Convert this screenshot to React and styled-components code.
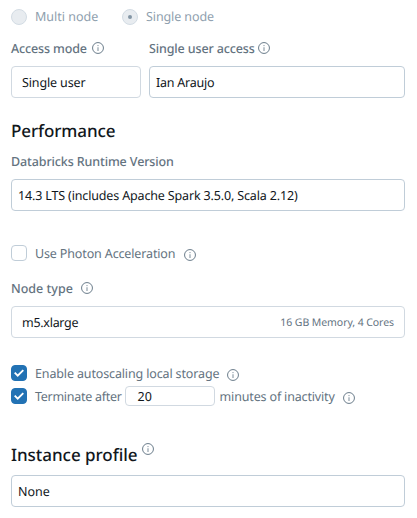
import React from "react";
import styled, { createGlobalStyle } from "styled-components";

const GlobalStyle = createGlobalStyle`
  * { box-sizing: border-box; }
  body {
    margin: 0;
    background: #fff;
    font-family: "Noto Sans", "Open Sans", sans-serif;
    font-size: 12.5px;
    line-height: 20px;
    color: #11171c;
    text-rendering: geometricPrecision;
  }
`;

const Form = styled.main`
  width: 417px;
  height: 518px;
  padding: 7px 12px 0 11px;
  overflow: hidden;
`;

const Row = styled.div`
  display: flex;
  align-items: center;
  height: ${(p) => p.$height || 20}px;
  margin-top: ${(p) => p.$top || 0}px;
`;

const Text = styled.span`
  white-space: nowrap;
  flex: none;
  padding-top: 1px;
  color: ${(p) => p.$color || "#64737f"};
  letter-spacing: ${(p) => p.$track ?? -0.14}px;
`;

const Label = styled(Text)`
  font-weight: 550;
`;

const Heading = styled.h2`
  margin: 0;
  font-size: 17px;
  line-height: 24px;
  font-weight: 500;
  white-space: nowrap;
  letter-spacing: ${(p) => p.$track || 0}px;
`;

const Small = styled(Text)`
  font-size: 10.5px;
  margin-left: auto;
`;

const Radio = styled.span`
  display: flex;
  align-items: center;
  justify-content: center;
  flex: none;
  width: 16px;
  height: 16px;
  margin: 2px 8px 0 0;
  border: 1px solid #d3dce4;
  border-radius: 50%;
  background: #e8ecf0;
  &::after {
    content: "";
    width: 4px;
    height: 4px;
    border-radius: 50%;
    background: ${(p) => (p.$checked ? "#8396a5" : "transparent")};
  }
`;

const Option = styled.div`
  display: flex;
  align-items: center;
  height: 18px;
  width: 111px;
`;

const Column = styled.div`
  display: flex;
  align-items: center;
  width: ${(p) => p.$width}px;
`;

const Field = styled.div`
  display: flex;
  align-items: center;
  width: ${(p) => (p.$width ? p.$width + "px" : "100%")};
  height: 32px;
  margin-top: ${(p) => p.$top || 0}px;
  padding: 0 10px 0 ${(p) => p.$inset || 6}px;
  border: 1px solid ${(p) => (p.$light ? "#d1d9e1" : "#c0cdd8")};
  border-radius: 4px;
`;

const Minutes = styled.div`
  display: flex;
  align-items: center;
  width: 90px;
  height: 20px;
  margin: 0 5px 0 3px;
  padding-left: 12px;
  border: 1px solid #d1d9e1;
  border-radius: 4px;
`;

const Box = styled.span`
  display: flex;
  flex: none;
  width: 16px;
  height: 16px;
  margin-right: 8px;
  border: 1px solid ${(p) => (p.$checked ? "#2272b4" : "#c0cdd8")};
  border-radius: 4px;
  background: ${(p) => (p.$checked ? "#2272b4" : "#fff")};
`;

const InfoSvg = styled.svg`
  display: block;
  flex: none;
  width: 12px;
  height: 12px;
  margin: ${(p) => p.$top || 0}px 0 0 ${(p) => p.$gap || 0}px;
`;

const Info = (props) => (
  <InfoSvg viewBox="0 0 12 12" fill="none" {...props}>
    <circle cx="6" cy="6" r="5.45" stroke="#6b7d8b" strokeWidth="1" />
    <path d="M6 5.2V9" stroke="#8796a2" strokeWidth="1.1" />
    <circle cx="6" cy="3.6" r=".7" fill="#8796a2" />
  </InfoSvg>
);

const Checkbox = ({ checked }) => (
  <Box $checked={checked}>
    {checked && (
      <svg width="14" height="14" viewBox="0 0 14 14" fill="none">
        <path d="M2.7 6.7 5.7 9.7 11.3 4.1" stroke="#fff" strokeWidth="1.9" />
      </svg>
    )}
  </Box>
);

const INK = "#11171c";
const MUTED = "#8fa0ae";

export default function App() {
  return (
    <>
      <GlobalStyle />
      <Form>
        <Row $height={18}>
          <Option>
            <Radio />
            <Text $color={MUTED} $track={0}>Multi node</Text>
          </Option>
          <Option>
            <Radio $checked />
            <Text $color={MUTED} $track={-0.1}>Single node</Text>
          </Option>
        </Row>
        <Row $top={13}>
          <Column $width={138}>
            <Label $track={-0.14}>Access mode</Label>
            <Info $gap={5} $top={-1} />
          </Column>
          <Column $width={256}>
            <Label $track={-0.13}>Single user access</Label>
            <Info $gap={3} $top={-1} />
          </Column>
        </Row>
        <Row $height={32} $top={8}>
          <Column $width={138}>
            <Field $width={130} $inset={10} $light>
              <Text $color={INK}>Single user</Text>
            </Field>
          </Column>
          <Field $width={256}>
            <Text $color={INK} $track={-0.24}>Ian Araujo</Text>
          </Field>
        </Row>
        <Row $height={24} $top={21}>
          <Heading $track={-0.1}>Performance</Heading>
        </Row>
        <Row $top={8}>
          <Label $track={-0.12}>Databricks Runtime Version</Label>
        </Row>
        <Field $top={8}>
          <Text $color={INK} $track={-0.15}>14.3 LTS (includes Apache Spark 3.5.0, Scala 2.12)</Text>
        </Field>
        <Row $top={32}>
          <Checkbox />
          <Text>Use Photon Acceleration</Text>
          <Info $gap={9} $top={4} />
        </Row>
        <Row $top={15}>
          <Label $track={0}>Node type</Label>
          <Info $gap={8} />
        </Row>
        <Field $top={8} $inset={10} $light>
          <Text $color={INK} $track={-0.28}>m5.xlarge</Text>
          <Small $track={-0.07}>16 GB Memory, 4 Cores</Small>
        </Field>
        <Row $top={25}>
          <Checkbox checked />
          <Text>Enable autoscaling local storage</Text>
          <Info $gap={8} $top={4} />
        </Row>
        <Row $top={3}>
          <Checkbox checked />
          <Text $track={-0.28}>Terminate after</Text>
          <Minutes>
            <Text $color={INK} $track={0}>20</Text>
          </Minutes>
          <Text $track={-0.16}>minutes of inactivity</Text>
          <Info $gap={8} $top={4} />
        </Row>
        <Row $height={24} $top={37}>
          <Heading $track={-0.04}>Instance profile</Heading>
          <Info $gap={4} $top={-12} />
        </Row>
        <Field $top={8}>
          <Text $color={INK} $track={0}>None</Text>
        </Field>
      </Form>
    </>
  );
}
